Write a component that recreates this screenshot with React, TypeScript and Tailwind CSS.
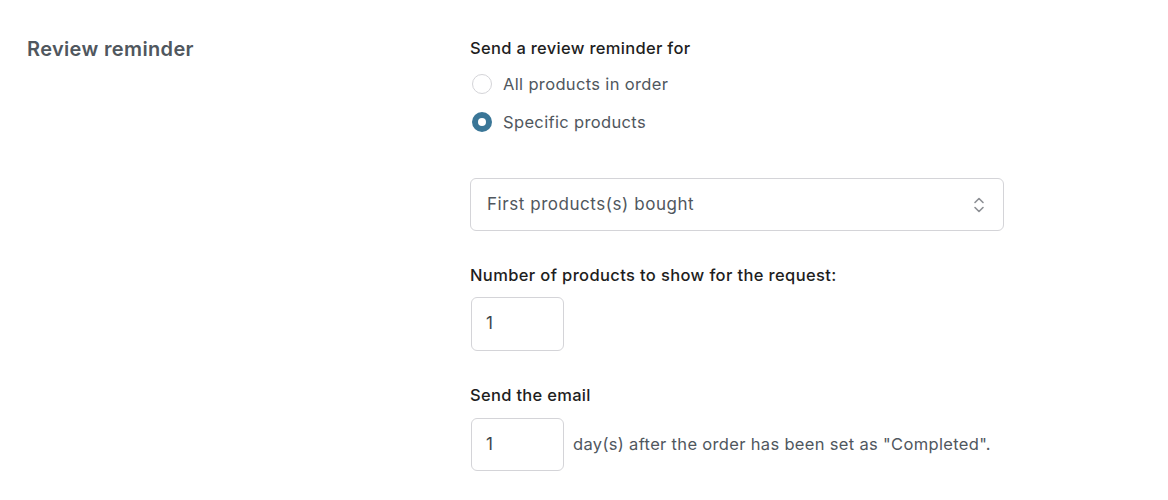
import React from "react";

export default function App() {
  return (
    <div className="w-[1168px] h-[500px] bg-white flex" style={{ fontFamily: "Inter, 'Noto Sans', sans-serif" }}>
      <div className="w-[470px] pl-[27px] pt-[36px] shrink-0">
        <h2 className="text-[20px] leading-[26px] font-semibold tracking-[0.35px] text-[#50575e]">Review reminder</h2>
      </div>
      <div className="pt-[36px] flex flex-col">
        <div className="text-[16.5px] leading-[24px] font-medium tracking-[0.3px] text-[#1e1e1e]">Send a review reminder for</div>
        <div className="mt-[5px] flex flex-col">
          <label className="h-[38px] flex items-center gap-[11px] pl-[2px]">
            <span className="w-[20px] h-[20px] rounded-full border border-[#d4d4d8] bg-white"></span>
            <span className="text-[16.5px] tracking-[0.35px] text-[#50575e]">All products in order</span>
          </label>
          <label className="h-[38px] flex items-center gap-[11px] pl-[2px]">
            <span className="w-[20px] h-[20px] rounded-full bg-[#3a7697] flex items-center justify-center">
              <span className="w-[8px] h-[8px] rounded-full bg-white"></span>
            </span>
            <span className="text-[16.5px] tracking-[0.35px] text-[#50575e]">Specific products</span>
          </label>
        </div>
        <div className="mt-[37px] w-[534px] h-[53px] border border-[#d4d4d8] rounded-[6px] flex items-center justify-between pl-[16px] pr-[18px]">
          <span className="text-[17px] tracking-[0.55px] text-[#50575e]">First products(s) bought</span>
          <svg width="12" height="18" viewBox="0 0 12 18" fill="none" stroke="#8c8f94" strokeWidth="1.6" strokeLinecap="round" strokeLinejoin="round">
            <path d="M2 6.5 L6 2.5 L10 6.5" />
            <path d="M2 11.5 L6 15.5 L10 11.5" />
          </svg>
        </div>
        <div className="mt-[32px] text-[16.5px] leading-[24px] font-medium tracking-[0.37px] text-[#1e1e1e]">Number of products to show for the request:</div>
        <div className="mt-[10px] ml-[1px] w-[93px] h-[54px] border border-[#d4d4d8] rounded-[6px] flex items-center pl-[14px]">
          <span className="text-[17px] text-[#3c434a]">1</span>
        </div>
        <div className="mt-[32px] text-[16.5px] leading-[24px] font-medium tracking-[0.3px] text-[#1e1e1e]">Send the email</div>
        <div className="mt-[11px] ml-[1px] flex items-center gap-[9px]">
          <div className="w-[93px] h-[53px] border border-[#d4d4d8] rounded-[6px] flex items-center pl-[14px]">
            <span className="text-[17px] text-[#3c434a]">1</span>
          </div>
          <span className="text-[16.5px] tracking-[0.33px] text-[#50575e]">day(s) after the order has been set as "Completed".</span>
        </div>
      </div>
    </div>
  );
}
